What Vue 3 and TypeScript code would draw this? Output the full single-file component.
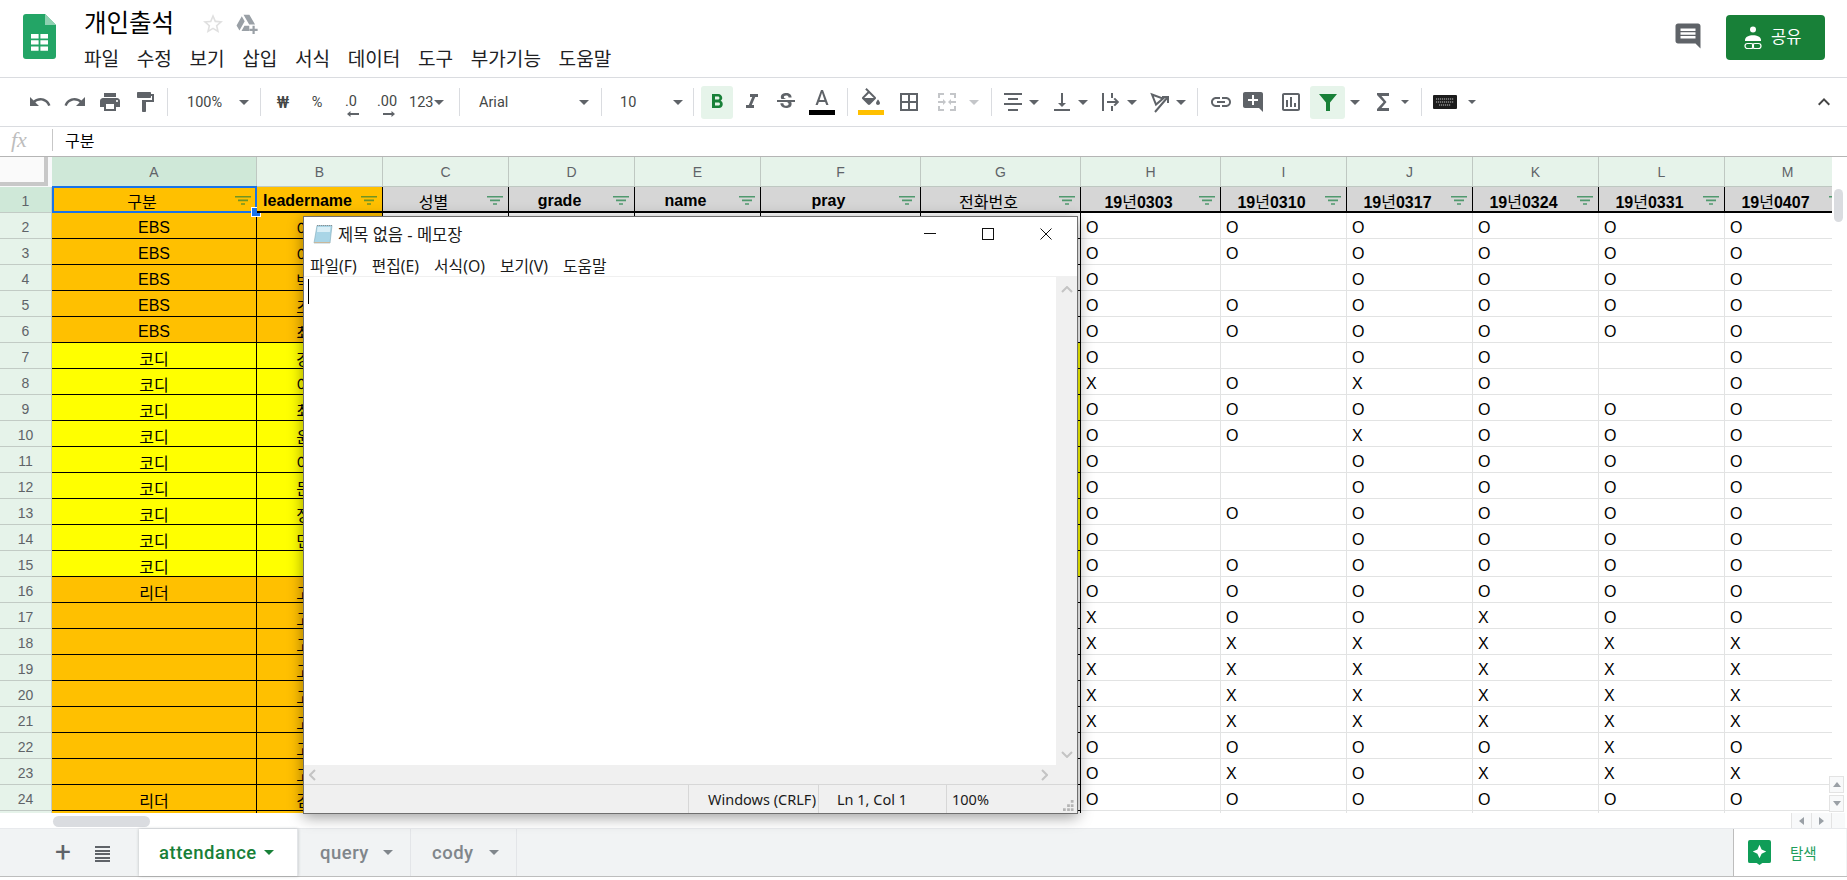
<script setup lang="ts">
const P: Record<string, string> = {
  undo: 'M12.5 8c-2.65 0-5.05.99-6.9 2.6L2 7v9h9l-3.62-3.62c1.39-1.16 3.16-1.88 5.12-1.88 3.54 0 6.55 2.31 7.6 5.5l2.37-.78C21.08 11.03 17.15 8 12.5 8z',
  redo: 'M18.4 10.6C16.55 8.99 14.15 8 11.5 8c-4.65 0-8.58 3.03-9.96 7.22L3.9 16c1.05-3.19 4.05-5.5 7.6-5.5 1.95 0 3.73.72 5.12 1.88L13 16h9V7l-3.6 3.6z',
  print: 'M19 8H5c-1.66 0-3 1.34-3 3v6h4v4h12v-4h4v-6c0-1.66-1.34-3-3-3zm-3 11H8v-5h8v5zm3-7c-.55 0-1-.45-1-1s.45-1 1-1 1 .45 1 1-.45 1-1 1zm-1-9H6v4h12V3z',
  paint: 'M18 4V3c0-.55-.45-1-1-1H5c-.55 0-1 .45-1 1v4c0 .55.45 1 1 1h12c.55 0 1-.45 1-1V6h1v4H9v11c0 .55.45 1 1 1h2c.55 0 1-.45 1-1v-9h8V4h-3z',
  bold: 'M15.6 10.79c.97-.67 1.65-1.77 1.65-2.79 0-2.26-1.75-4-4-4H7v14h7.04c2.09 0 3.71-1.7 3.71-3.79 0-1.52-.86-2.82-2.15-3.42zM10 6.5h3c.83 0 1.5.67 1.5 1.5s-.67 1.5-1.5 1.5h-3v-3zm3.5 9H10v-3h3.5c.83 0 1.5.67 1.5 1.5s-.67 1.5-1.5 1.5z',
  italic: 'M10 4v3h2.21l-3.42 8H6v3h8v-3h-2.21l3.42-8H18V4z',
  strike: 'M6.85 7.08C6.85 4.37 9.45 3 12.24 3c1.64 0 3 .49 3.9 1.28.77.65 1.46 1.73 1.46 3.24h-3.01c0-.31-.05-.59-.15-.85-.29-.86-1.2-1.28-2.25-1.28-1.86 0-2.34 1.02-2.34 1.7 0 .48.25.88.74 1.21.38.25.77.48 1.41.7H7.39c-.21-.34-.54-.89-.54-1.92zM21 12v-2H3v2h9.62c1.15.45 1.96.75 1.96 1.97 0 1-.81 1.67-2.28 1.67-1.54 0-2.93-.54-2.93-2.51H6.4c0 .55.08 1.13.24 1.58.81 2.29 3.29 3.3 5.67 3.3 2.27 0 5.3-.89 5.3-4.05 0-.3-.01-1.16-.48-1.94H21V12z',
  textA: 'M11 2L5.5 17h2.25l1.12-3h6.25l1.12 3h2.25L13 2h-2zm-1.38 10L12 4.67 14.38 12H9.62z',
  fill: 'M16.56 8.94L7.62 0 6.21 1.41l2.38 2.38-5.15 5.15c-.59.59-.59 1.54 0 2.12l5.5 5.5c.29.29.68.44 1.06.44s.77-.15 1.06-.44l5.5-5.5c.59-.58.59-1.53 0-2.12zM5.21 10L10 5.21 14.79 10H5.21zM19 11.5s-2 2.17-2 3.5c0 1.1.9 2 2 2s2-.9 2-2c0-1.33-2-3.5-2-3.5z',
  borders: 'M3 3v18h18V3H3zm8 16H5v-6h6v6zm0-8H5V5h6v6zm8 8h-6v-6h6v6zm0-8h-6V5h6v6z',
  merge: 'M3 3h6v2H5v3H3zM15 3h6v5h-2V5h-4zM3 16h2v3h4v2H3zM15 19h4v-3h2v5h-6zM3 11h5V9l3 3-3 3v-2H3zM21 11h-5V9l-3 3 3 3v-2h5z',
  halign: 'M3 3h18v2H3zM7 8h10v2H7zM3 13h18v2H3zM7 19h10v2H7z',
  valign: 'M16 13h-3V3h-2v10H8l4 4 4-4zM4 19v2h16v-2H4z',
  wrap: 'M3 3h2v18H3zM12 3h2v5h-2zM12 16h2v5h-2zM8 11h8.500l-2-2L16 7.800l4.200 4.200-4.200 4.200-1.500-1.200 2-2H8z',
  link: 'M3.9 12c0-1.71 1.39-3.1 3.1-3.1h4V7H7c-2.76 0-5 2.24-5 5s2.24 5 5 5h4v-1.9H7c-1.71 0-3.1-1.39-3.1-3.1zM8 13h8v-2H8v2zm9-6h-4v1.9h4c1.71 0 3.1 1.39 3.1 3.1s-1.39 3.1-3.1 3.1h-4V17h4c2.76 0 5-2.24 5-5s-2.24-5-5-5z',
  addComment: 'M22 4c0-1.1-.9-2-2-2H4c-1.1 0-2 .9-2 2v12c0 1.1.9 2 2 2h14l4 4V4zm-5 7h-4v4h-2v-4H7V9h4V5h2v4h4v2z',
  chart: 'M19 3H5c-1.1 0-2 .9-2 2v14c0 1.1.9 2 2 2h14c1.1 0 2-.9 2-2V5c0-1.1-.9-2-2-2zm0 16H5V5h14v14zM7 10h2v7H7zm4-3h2v10h-2zm4 6h2v4h-2z',
  funnel: 'M3 4h18l-7 8.5V21h-4v-8.5z',
  sigma: 'M18 3H6v2l6.5 7L6 19v2h12v-3h-7.5l5-6-5-6H18z',
  chevron: 'M7.41 15.41L12 10.83l4.59 4.58L18 14l-6-6-6 6z',
  comment: 'M21.99 4c0-1.1-.89-2-1.99-2H4c-1.1 0-2 .9-2 2v12c0 1.1.9 2 2 2h14l4 4-.01-18zM18 14H6v-2h12v2zm0-3H6V9h12v2zm0-3H6V6h12v2z',
  star: 'M22 9.24l-7.19-.62L12 2 9.19 8.63 2 9.24l5.46 4.73L5.82 21 12 17.27 18.18 21l-1.63-7.03L22 9.24zM12 15.4l-3.76 2.27 1-4.28-3.32-2.88 4.38-.38L12 6.1l1.71 4.04 4.38.38-3.32 2.88 1 4.28L12 15.4z',
  drive: 'M8.2 2h6.4l6.2 10.5h-6.4zM6.3 3.6L.6 13.5l3.2 5.5 5.7-9.9zM6 19.5l3.2-5.5h5.3v5.5z M18 14h2.4v3.2h3.2v2.4h-3.2v3.2H18v-3.2h-3.2v-2.4H18z',
}

const menus = ['파일', '수정', '보기', '삽입', '서식', '데이터', '도구', '부가기능', '도움말']
const columns = ['구분', 'leadername', '성별', 'grade', 'name', 'pray', '전화번호', '19년0303', '19년0310', '19년0317', '19년0324', '19년0331', '19년0407'].map((head, i) => ({
  letter: String.fromCharCode(65 + i),
  head,
  // Hangul sets in regular weight in the reference; Latin and digits stay bold
  parts: head.split(/([가-힣]+)/).filter(Boolean).map((text) => ({ text, ko: /[가-힣]/.test(text) })),
}))
const attendance = [
  'OOOOOO', 'OOOOOO', 'O OOOO', 'OOOOOO', 'OOOOOO', 'O OO O', 'XOXO O', 'OOOOOO', 'OOXOOO', 'O OOOO', 'O OOOO', 'OOOOOO',
  'O OOOO', 'OOOOOO', 'OOOOOO', 'XOOXOO', 'XXXXXX', 'XXXXXX', 'XXXXXX', 'XXXXXX', 'OOOOXO', 'OXOXXX', 'OOOOOO', '      ',
]
const kinds = ['EBS', 'EBS', 'EBS', 'EBS', 'EBS', '코디', '코디', '코디', '코디', '코디', '코디', '코디', '코디', '코디', '리더', '', '', '', '', '', '', '', '리더', '']
const leaders = '이이박조최강이최윤이문정민 고고고고고고고고김 '

interface Cell { text: string; cls: string }
const rows = attendance.map((marks, i) => {
  const num = i + 2
  const yellow = num >= 7 && num <= 15
  const fill = yellow ? 'yellow' : 'orange'
  const cells: Cell[] = []
  cells.push({ text: kinds[i], cls: `dark center ${fill}` })
  const lead = leaders[i].trim()
  cells.push({ text: lead ? `${lead}〇〇` : '', cls: `dark center ${fill}` })
  for (let c = 0; c < 5; c++) cells.push({ text: '', cls: `dark ${yellow ? 'yellow' : ''}` })
  for (const m of marks) cells.push({ text: m.trim(), cls: 'light' })
  return { num, label: num < 25 ? String(num) : '', cells }
})
</script>

<template>
  <div class="page">
    <header class="top">
      <svg class="logo" viewBox="0 0 33 45">
        <path fill="#23a566" d="M3 0h19l11 11v31a3 3 0 0 1-3 3H3a3 3 0 0 1-3-3V3a3 3 0 0 1 3-3z" />
        <path fill="#8ed1b1" d="M22 0l11 11H22z" />
        <path fill="#fff" d="M8 20h7.6v4.4H8zM17.4 20H25v4.4h-7.6zM8 26.2h7.6v4.4H8zM17.4 26.2H25v4.4h-7.6zM8 32.4h7.6v4.4H8zM17.4 32.4H25v4.4h-7.6z" />
      </svg>
      <div class="doc">
        <div class="title-row">
          <span class="title">개인출석</span>
          <svg class="star" viewBox="0 0 24 24"><path :d="P.star" /></svg>
          <svg class="drive" viewBox="0 0 24 24"><path :d="P.drive" /></svg>
        </div>
        <nav class="menu"><span v-for="m in menus" :key="m">{{ m }}</span></nav>
      </div>
      <svg class="comment" viewBox="0 0 24 24"><path :d="P.comment" /></svg>
      <button class="share">
        <svg viewBox="0 0 18 24" class="share-ic">
          <circle cx="9" cy="3.5" r="3" fill="#fff" />
          <path fill="#fff" d="M1 14c0-3.2 4-4.8 8-4.8s8 1.6 8 4.8v1H1z" />
          <rect x="1" y="17.5" width="8.5" height="5" rx="2.5" fill="none" stroke="#fff" stroke-width="1.2" />
          <rect x="8.5" y="17.5" width="8.5" height="5" rx="2.5" fill="none" stroke="#fff" stroke-width="1.2" />
        </svg>
        <span>공유</span>
      </button>
    </header>

    <div class="toolbar">
      <span class="tool w35"><svg class="ic" viewBox="0 0 24 24"><path :d="P.undo" /></svg></span>
      <span class="tool w35"><svg class="ic" viewBox="0 0 24 24"><path :d="P.redo" /></svg></span>
      <span class="tool w35"><svg class="ic" viewBox="0 0 24 24"><path :d="P.print" /></svg></span>
      <span class="tool w35"><svg class="ic" viewBox="0 0 24 24"><path :d="P.paint" /></svg></span>
      <i class="sep ml5" />
      <span class="pick zoom"><span>100%</span><i class="caret" /></span>
      <i class="sep" />
      <span class="tool w34 ml5 txt">₩</span>
      <span class="tool w34 txt pct">%</span>
      <span class="tool w34 dec">
        <span>.0</span>
        <svg viewBox="0 0 12 6"><path d="M0 3l3.5-3v2H12v2H3.5v2z" /></svg>
      </span>
      <span class="tool w38 dec">
        <span>.00</span>
        <svg viewBox="0 0 12 6"><path d="M12 3L8.500 0v2H0v2h8.500v2z" /></svg>
      </span>
      <span class="tool w46 num"><span>123</span><i class="caret" /></span>
      <i class="sep ml7" />
      <span class="pick font"><span>Arial</span><i class="caret" /></span>
      <i class="sep" />
      <span class="pick size"><span>10</span><i class="caret" /></span>
      <i class="sep" />
      <span class="tool w32 ml7 active"><svg class="ic green" viewBox="0 0 24 24"><path :d="P.bold" /></svg></span>
      <span class="tool w34 ml2"><svg class="ic" viewBox="0 0 24 24"><path :d="P.italic" /></svg></span>
      <span class="tool w34"><svg class="ic" viewBox="0 0 24 24"><path :d="P.strike" /></svg></span>
      <span class="tool w34 ml2 swatch">
        <svg class="ic" viewBox="0 0 24 19"><path :d="P.textA" /></svg>
        <b class="bar black" />
      </span>
      <i class="sep ml8" />
      <span class="tool w34 ml6 swatch">
        <svg class="ic" viewBox="0 0 24 19"><path :d="P.fill" /></svg>
        <b class="bar amber" />
      </span>
      <span class="tool w34 ml4"><svg class="ic" viewBox="0 0 24 24"><path :d="P.borders" /></svg></span>
      <span class="tool w34 ml4"><svg class="ic off" viewBox="0 0 24 24"><path :d="P.merge" /></svg></span>
      <span class="tool w20"><i class="caret off" /></span>
      <i class="sep ml7" />
      <span class="combo ml5"><svg class="ic" viewBox="0 0 24 24"><path :d="P.halign" /></svg><i class="caret" /></span>
      <span class="combo"><svg class="ic" viewBox="0 0 24 24"><path :d="P.valign" /></svg><i class="caret" /></span>
      <span class="combo"><svg class="ic" viewBox="0 0 24 24"><path :d="P.wrap" /></svg><i class="caret" /></span>
      <span class="combo">
        <svg class="ic" viewBox="0 0 24 24">
          <path d="M4 4.500l11 4-7 6z" fill="none" stroke="#5f6368" stroke-width="2" />
          <path d="M7 22L19 8M14 7h6v6" fill="none" stroke="#5f6368" stroke-width="2" />
        </svg>
        <i class="caret" />
      </span>
      <i class="sep ml4" />
      <span class="tool w32 ml7"><svg class="ic" viewBox="0 0 24 24"><path :d="P.link" /></svg></span>
      <span class="tool w32"><svg class="ic" viewBox="0 0 24 24"><path :d="P.addComment" /></svg></span>
      <span class="tool w34 ml5"><svg class="ic" viewBox="0 0 24 24"><path :d="P.chart" /></svg></span>
      <span class="tool w35 ml2 active"><svg class="ic green" viewBox="0 0 24 24"><path :d="P.funnel" /></svg></span>
      <span class="tool w20"><i class="caret" /></span>
      <span class="tool w36"><svg class="ic" viewBox="0 0 24 24"><path :d="P.sigma" /></svg></span>
      <span class="tool w8"><i class="caret small" /></span>
      <i class="sep ml12" />
      <span class="tool w46">
        <svg class="keys" viewBox="0 0 24 14">
          <rect width="24" height="14" rx="1" fill="#1c1c1c" />
          <path d="M3 4h18M3 7h18M6 10h12" stroke="#8a8a8a" stroke-width="1.400" stroke-dasharray="1.200 .8" />
        </svg>
      </span>
      <span class="tool w8"><i class="caret small" /></span>
      <svg class="ic collapse" viewBox="0 0 24 24"><path :d="P.chevron" /></svg>
    </div>

    <div class="formula">
      <span class="fx">fx</span>
      <i class="fx-sep" />
      <span class="fx-text">구분</span>
    </div>

    <div class="sheet">
      <div class="grid-wrap">
        <div class="grid">
          <div class="corner"><i /></div>
          <div v-for="(c, i) in columns" :key="c.letter" class="col-head" :class="{ picked: i === 0 }">{{ c.letter }}</div>

          <div class="row-head picked">1</div>
          <div
            v-for="(c, i) in columns"
            :key="c.head"
            class="head-cell"
            :class="{ amber: i < 2 }"
          >
            <span class="head-text"><span v-for="(p, k) in c.parts" :key="k" :class="{ ko: p.ko }">{{ p.text }}</span></span>
            <svg class="filter" viewBox="0 0 16 9">
              <path d="M0 0h16v1.600H0zM3 3.600h10v1.600H3zM6 7.200h4v1.600H6z" />
            </svg>
            <div v-if="i === 0" class="selection"><i /></div>
          </div>

          <template v-for="r in rows" :key="r.num">
            <div class="row-head">{{ r.label }}</div>
            <div v-for="(cell, j) in r.cells" :key="j" class="cell" :class="cell.cls">{{ cell.text }}</div>
          </template>
        </div>
      </div>
      <div class="vbar">
        <i class="vthumb" />
        <div class="vbtns">
          <span class="vbtn"><i class="tri up" /></span>
          <span class="vbtn"><i class="tri down" /></span>
        </div>
      </div>
    </div>

    <div class="hbar">
      <i class="hthumb" />
      <span class="hbtn"><i class="tri left" /></span>
      <span class="hbtn"><i class="tri right" /></span>
      <span class="hbtn wide" />
    </div>

    <footer class="tabs">
      <span class="plus">+</span>
      <span class="list"><i /><i /><i /><i /><i /></span>
      <div class="tab on"><span>attendance</span><i class="caret" /></div>
      <div class="tab q"><span>query</span><i class="caret" /></div>
      <div class="tab c"><span>cody</span><i class="caret" /></div>
      <div class="explore">
        <svg viewBox="0 0 24 26" class="explore-ic">
          <path fill="#0f9d58" d="M2 0h20a2 2 0 0 1 2 2v20a2 2 0 0 1-2 2h-7l-3 2-3-2H2a2 2 0 0 1-2-2V2a2 2 0 0 1 2-2z" />
          <path fill="#fff" d="M12 5l2.200 4.800L19 12l-4.800 2.200L12 19l-2.200-4.800L5 12l4.800-2.200z" />
        </svg>
        <span>탐색</span>
      </div>
    </footer>

    <section class="notepad">
      <div class="np-title">
        <svg class="np-icon" viewBox="0 0 20 20">
          <path fill="#a9d5e6" stroke="#7fa9b8" stroke-width=".6" d="M4 1.500h15l-2 17.500H1z" />
          <path fill="#d9eef6" d="M4.500 3h13l-.6 5H4z" />
          <path stroke="#8a8f92" stroke-width="1" stroke-dasharray="1 1" d="M4 1.500h15" />
          <path fill="#c9b79a" d="M1 19h16l.2-1H1.200z" />
        </svg>
        <span class="np-name">제목 없음 - 메모장</span>
        <span class="np-ctrl"><i class="np-min" /></span>
        <span class="np-ctrl"><i class="np-max" /></span>
        <span class="np-ctrl np-close">
          <svg viewBox="0 0 12 12"><path d="M.5.500l11 11M11.500.500l-11 11" stroke="#111" stroke-width="1" fill="none" /></svg>
        </span>
      </div>
      <div class="np-menu">
        <span>파일(F)</span><span>편집(E)</span><span>서식(O)</span><span>보기(V)</span><span>도움말</span>
      </div>
      <div class="np-body">
        <div class="np-edit"><i class="np-caret" /></div>
        <div class="np-v">
          <svg viewBox="0 0 12 7"><path d="M1 6l5-5 5 5" /></svg>
          <svg viewBox="0 0 12 7"><path d="M1 1l5 5 5-5" /></svg>
        </div>
      </div>
      <div class="np-h">
        <svg viewBox="0 0 7 12"><path d="M6 1L1 6l5 5" /></svg>
        <svg viewBox="0 0 7 12"><path d="M1 1l5 5-5 5" /></svg>
      </div>
      <div class="np-status">
        <span class="st st-a">Windows (CRLF)</span>
        <span class="st st-b">Ln 1, Col 1</span>
        <span class="st st-c">100%</span>
        <svg class="grip" viewBox="0 0 12 12">
          <path fill="#b5b5b5" d="M8.500 0h3v3h-3zM4.500 4.500h3v3h-3zM8.500 4.500h3v3h-3zM0 9h3v3H0zM4.500 9h3v3h-3zM8.500 9h3v3h-3z" />
        </svg>
      </div>
    </section>
  </div>
</template>

<style>
html, body { margin: 0; background: #fff; overflow: hidden; }
</style>

<style scoped>
.page {
  position: relative; width: 1847px; height: 880px; overflow: hidden; box-sizing: border-box;
  display: flex; flex-direction: column; background: #fff;
  font-family: "Liberation Sans", "Noto Sans CJK KR", sans-serif; color: #000;
}
i, b { display: block; }

/* top */
.top { height: 78px; box-sizing: border-box; flex: none; border-bottom: 1px solid #dadce0; display: flex; align-items: flex-start; position: relative; padding-left: 23px; }
.logo { width: 33px; height: 45px; margin-top: 14px; flex: none; }
.doc { margin-left: 28px; padding-top: 7px; font-family: "Noto Sans CJK KR", sans-serif; }
.title-row { display: flex; align-items: center; height: 30px; }
.title { font-size: 24.500px; line-height: 30px; width: 117px; color: #000; }
.star { width: 24px; height: 24px; fill: #e0e0e0; position: relative; top: 2px; }
.drive { width: 22px; height: 22px; fill: #9aa0a6; margin-left: 11px; position: relative; top: 2px; }
.menu { display: flex; gap: 17.600px; font-size: 19.100px; line-height: 24px; margin-top: 9px; color: #202124; white-space: nowrap; }
.comment { width: 30px; height: 30px; fill: #5f6368; position: absolute; left: 1673px; top: 21px; }
.share {
  position: absolute; left: 1726px; top: 15px; width: 99px; height: 45px; box-sizing: border-box; border: 0; border-radius: 4px;
  background: #188038; color: #fff; display: flex; align-items: center; padding: 0 0 0 18px; gap: 9px;
  font: 16.500px "Noto Sans CJK KR", sans-serif;
}
.share-ic { width: 18px; height: 24px; }
.share span { position: relative; top: -2px; }

/* toolbar */
.toolbar { height: 49px; box-sizing: border-box; flex: none; border-bottom: 1px solid #dadce0; display: flex; align-items: center; padding-left: 22px; font-family: Roboto, sans-serif; color: #444746; }
.tool { height: 33px; display: flex; align-items: center; justify-content: center; flex: none; border-radius: 3px; }
.ic { width: 24px; height: 24px; fill: #5f6368; flex: none; }
.ic.green { fill: #188038; }
.ic.off { fill: #c4c6c9; }
.w8 { width: 8px; } .w20 { width: 20px; } .w32 { width: 32px; } .w34 { width: 34px; } .w35 { width: 35px; }
.w36 { width: 36px; } .w38 { width: 38px; } .w46 { width: 46px; }
.ml2 { margin-left: 2px; } .ml4 { margin-left: 4px; } .ml5 { margin-left: 5px; } .ml6 { margin-left: 6px; }
.ml7 { margin-left: 7px; } .ml8 { margin-left: 8px; } .ml12 { margin-left: 12px; }
.sep { width: 1px; height: 28px; background: #dadce0; flex: none; }
.caret { width: 0; height: 0; border-left: 5px solid transparent; border-right: 5px solid transparent; border-top: 5px solid #5f6368; flex: none; }
.caret.off { border-top-color: #c4c6c9; }
.caret.small { border-left-width: 4px; border-right-width: 4px; border-top-width: 4px; }
.pick { height: 33px; display: flex; align-items: center; justify-content: space-between; box-sizing: border-box; font-size: 14.500px; flex: none; }
.zoom { width: 92px; padding: 0 11px 0 19px; }
.font { width: 141px; padding: 0 12px 0 19px; }
.size { width: 91px; padding: 0 10px 0 18px; }
.txt { font-size: 16px; font-weight: 500; }
.pct { font-size: 14.500px; font-weight: 400; }
.dec { flex-direction: column; font-size: 14.500px; line-height: 15px; position: relative; top: 3px; }
.dec svg { width: 12px; height: 6px; fill: #5f6368; margin: 2px 0 0 4px; }
.num { font-size: 14.500px; justify-content: flex-start; padding-left: 3px; gap: 1px; box-sizing: border-box; }
.active { background: #e6f4ea; }
.swatch { flex-direction: column; justify-content: flex-start; padding-top: 2px; box-sizing: border-box; }
.swatch .ic { height: 19px; }
.bar { width: 26px; height: 5px; margin-top: 3px; }
.bar.black { background: #000; }
.bar.amber { background: #ffc000; }
.combo { width: 49px; height: 33px; flex: none; display: flex; align-items: center; padding-left: 4px; box-sizing: border-box; }
.combo .caret { margin-left: 4px; }
.keys { width: 24px; height: 14px; }
.collapse { margin-left: auto; margin-right: 11px; fill: #444; }

/* formula bar */
.formula { height: 30px; box-sizing: border-box; flex: none; display: flex; align-items: center; border-bottom: 1px solid #b5b5b5; }
.fx { width: 52px; box-sizing: border-box; padding-left: 11px; font: italic 22px "Liberation Serif", serif; color: #bdbdbd; position: relative; top: -2px; }
.fx-sep { width: 1px; height: 22px; background: #c7c7c7; position: relative; top: -2px; }
.fx-text { margin-left: 12px; font-size: 16px; color: #000; position: relative; top: -2px; }

/* sheet */
.sheet { height: 656px; flex: none; display: flex; }
.grid-wrap { width: 1832px; overflow: hidden; flex: none; }
.grid {
  display: grid; width: 1977px;
  grid-template-columns: 52px 205px 126px 126px 126px 126px 160px 160px 140px 126px 126px 126px 126px 126px;
  grid-template-rows: 30px; grid-auto-rows: 26px;
}
.corner { background: #f8f9fa; position: relative; }
.corner i { width: 44px; height: 25px; border-right: 4px solid #c8c8c8; border-bottom: 4px solid #c8c8c8; background: #fafafa; }
.col-head {
  background: #e6f3ea; color: #5f6368; font-size: 14px; display: flex; align-items: center; justify-content: center;
  box-sizing: border-box; border-right: 1px solid #bfc8c2; border-bottom: 1px solid #bfc8c2;
}
.row-head {
  background: #e6f3ea; color: #5f6368; font-size: 14px; display: flex; align-items: center; justify-content: center;
  box-sizing: border-box; border-right: 1px solid #c2cbc5; border-bottom: 1px solid #c2cbc5; padding-top: 2px;
}
.picked { background: #cfe8d8; }
.head-cell {
  position: relative; box-sizing: border-box; background: #d6d6d6; border-right: 1px solid #000; border-bottom: 2px solid #000;
  display: flex; align-items: center; font-weight: 700; font-size: 16px; padding-top: 3px;
}
.head-cell.amber { background: #ffc000; }
.head-text { flex: 1; text-align: center; white-space: nowrap; min-width: 0; }
.ko { font-weight: 400; }
.filter { width: 16px; height: 9px; fill: #2f8a55; opacity: .8; margin: 0 5px 0 3px; flex: none; }
.amber .filter { fill: #4d8a2c; }
.selection { position: absolute; inset: -1px -1px -2px 0; border: 2px solid #1a73e8; box-sizing: border-box; }
.selection i { position: absolute; right: -6px; bottom: -6px; width: 8px; height: 8px; background: #1a73e8; border: 1px solid #fff; }
.cell {
  box-sizing: border-box; font-size: 16px; display: flex; align-items: center; padding-left: 5px; padding-top: 4px;
  white-space: nowrap; overflow: hidden; background: #fff;
}
.center { justify-content: center; padding-left: 0; }
.dark { border-right: 1px solid #000; border-bottom: 1px solid #000; }
.light { border-right: 1px solid #e2e3e3; border-bottom: 1px solid #e2e3e3; }
.orange { background: #ffc000; }
.yellow { background: #ffff00; }

.vbar { flex: 1; position: relative; background: #fff; }
.vthumb { position: absolute; left: 2px; top: 32px; width: 9px; height: 33px; border-radius: 5px; background: #dadce0; }
.vbtns { position: absolute; left: -3px; bottom: 1px; width: 15px; display: flex; flex-direction: column; gap: 2px; }
.vbtn { height: 17px; background: #f8f9fa; border: 1px solid #e3e3e3; box-sizing: border-box; display: flex; align-items: center; justify-content: center; }
.tri { width: 0; height: 0; border: 4px solid transparent; }
.tri.up { border-top: 0; border-bottom: 5px solid #9aa0a6; }
.tri.down { border-bottom: 0; border-top: 5px solid #9aa0a6; }
.tri.left { border-left: 0; border-right: 5px solid #9aa0a6; }
.tri.right { border-right: 0; border-left: 5px solid #9aa0a6; }

.hbar { height: 15px; flex: none; position: relative; display: flex; justify-content: flex-end; padding-right: 2px; box-sizing: border-box; }
.hthumb { position: absolute; left: 53px; top: 3px; width: 97px; height: 11px; border-radius: 6px; background: #dadce0; }
.hbtn { width: 20px; height: 15px; box-sizing: border-box; background: #f8f9fa; border-left: 1px solid #e3e3e3; display: flex; align-items: center; justify-content: center; }
.hbtn.wide { width: 14px; }

/* tabs */
.tabs {
  height: 49px; flex: none; box-sizing: border-box; display: flex; background: #f1f3f4; border-bottom: 1px solid #bdbdbd;
  border-top: 1px solid #e8eaed; position: relative; font-family: Roboto, sans-serif; font-size: 18.500px;
}
.plus { position: absolute; left: 54px; top: 5px; width: 18px; text-align: center; font-size: 28px; line-height: 36px; color: #5f6368; }
.list { position: absolute; left: 95px; top: 17px; width: 15px; display: flex; flex-direction: column; gap: 1.500px; }
.list i { height: 2px; background: #5f6368; }
.tab { height: 47px; box-sizing: border-box; display: flex; align-items: center; color: #80868b; font-weight: 500; letter-spacing: .5px; border-right: 1px solid #e3e5e8; }
.tab .caret { border-top-color: #80868b; }
.tab.on { margin-left: 139px; width: 159px; padding-left: 20px; gap: 7px; background: #fff; color: #188038; box-shadow: 0 0 3px rgba(60, 64, 67, .3); position: relative; }
.tab.on .caret { border-top-color: #188038; }
.tab.q { width: 113px; padding-left: 22px; gap: 14px; }
.tab.c { width: 106px; padding-left: 21px; gap: 15px; }
.explore {
  margin-left: auto; width: 113px; box-sizing: border-box; background: #fff; border-left: 1px solid #bdbdbd; margin-right: 1px;
  display: flex; align-items: center; padding-left: 14px; gap: 19px; color: #1e9e5c; font: 14.500px "Noto Sans CJK KR", sans-serif;
}
.explore-ic { width: 23px; height: 25px; }

/* notepad window */
.notepad {
  position: absolute; left: 303px; top: 216px; width: 775px; height: 598px; box-sizing: border-box; background: #fff;
  border: 1px solid #6f6f6f; box-shadow: 0 3px 14px rgba(0, 0, 0, .4); display: flex; flex-direction: column;
  font-family: "Noto Sans", "Noto Sans CJK KR", sans-serif; font-size: 14.500px; color: #1a1a1a;
}
.np-title { height: 33px; flex: none; display: flex; align-items: center; padding-left: 9px; }
.np-icon { width: 20px; height: 20px; margin-right: 5px; flex: none; }
.np-name { flex: 1; font-size: 16.500px; }
.np-ctrl { width: 58px; height: 33px; display: flex; align-items: center; justify-content: center; flex: none; }
.np-close { margin-right: 2px; }
.np-min { width: 12px; height: 1px; background: #111; }
.np-max { width: 10px; height: 10px; border: 1px solid #111; }
.np-close svg { width: 12px; height: 12px; }
.np-menu { height: 27px; box-sizing: border-box; padding-top: 4px; flex: none; display: flex; align-items: center; padding-left: 6px; gap: 15px; border-bottom: 1px solid #f0f0f0; font-size: 15.800px; }
.np-body { flex: 1; display: flex; min-height: 0; }
.np-edit { flex: 1; padding: 2px 0 0 4px; }
.np-caret { width: 1px; height: 25px; background: #000; }
.np-v { width: 21px; background: #f0f0f0; display: flex; flex-direction: column; justify-content: space-between; align-items: center; padding: 9px 0 7px; box-sizing: border-box; }
.np-v svg { width: 12px; height: 7px; fill: none; stroke: #c4c4c4; stroke-width: 2; }
.np-h { height: 20px; flex: none; background: #f0f0f0; display: flex; align-items: center; justify-content: space-between; padding: 0 29px 0 5px; box-sizing: border-box; border-bottom: 1px solid #d7d7d7; }
.np-h svg { width: 7px; height: 12px; fill: none; stroke: #c4c4c4; stroke-width: 2; }
.np-status { height: 28px; flex: none; background: #f0f0f0; display: flex; align-items: center; position: relative; font-size: 14.500px; white-space: nowrap; }
.st { height: 100%; box-sizing: border-box; display: flex; align-items: center; border-left: 1px solid #d7d7d7; flex: none; overflow: hidden; }
.st-a { margin-left: 384px; width: 130px; padding-left: 19px; }
.st-b { width: 128px; padding-left: 18px; }
.st-c { width: 60px; padding-left: 5px; }
.grip { position: absolute; right: 3px; bottom: 2px; width: 11px; height: 11px; }
</style>
